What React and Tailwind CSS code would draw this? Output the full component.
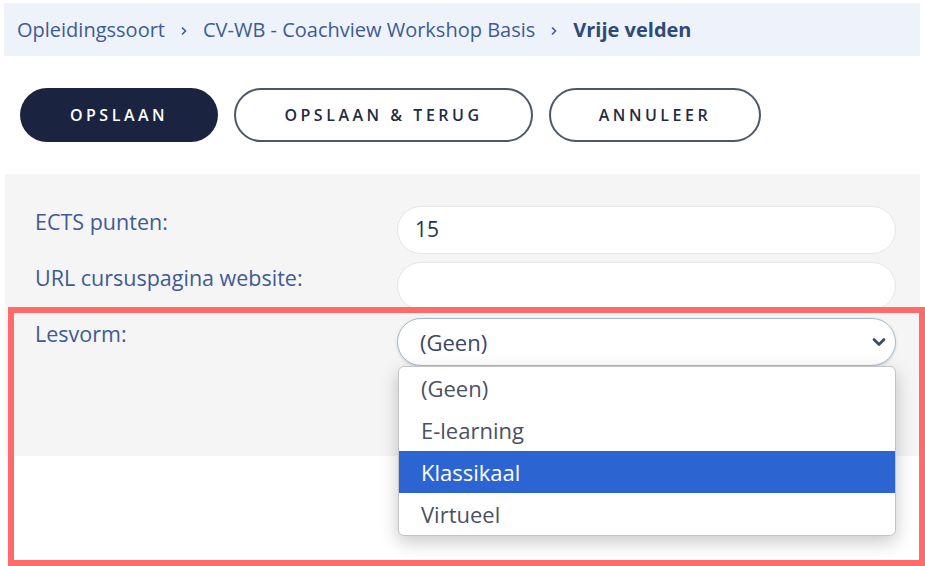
import { ChevronDown } from "lucide-react";

const font = { fontFamily: "'Open Sans', 'Noto Sans', sans-serif" };

function Crumb({ children, last }) {
  return (
    <>
      <span className={last ? "font-bold text-[#2f4a7a]" : "text-[#3e5b94]"}>{children}</span>
      {!last ? (
        <svg width="8" height="10" viewBox="0 0 8 10" className="mx-[15px] mt-[2px] text-[#3e5b94]">
          <path d="M2 1.5 L5.5 5 L2 8.5" fill="none" stroke="currentColor" strokeWidth="1.6" />
        </svg>
      ) : null}
    </>
  );
}

function Field({ label, children }) {
  return (
    <div className="flex items-start">
      <label className="w-[362px] pt-[2px] text-[21.5px] leading-[28px] text-[#3e5b94]">{label}</label>
      <div className="w-[499px]">{children}</div>
    </div>
  );
}

const options = ["(Geen)", "E-learning", "Klassikaal", "Virtueel"];

export default function App() {
  return (
    <div className="relative h-[566px] w-[925px] overflow-hidden bg-white pl-[4px] pr-[5px] pt-[3px]" style={font}>
      <nav className="flex h-[53px] items-center bg-[#eef3fb] px-[13px] text-[20px]">
        <Crumb>Opleidingssoort</Crumb>
        <Crumb>CV-WB - Coachview Workshop Basis</Crumb>
        <Crumb last>Vrije velden</Crumb>
      </nav>

      <div className="mt-[32px] flex gap-[16px] pl-[16px]">
        <button className="h-[54px] w-[198px] rounded-full bg-[#1a2340] text-[16px] font-semibold tracking-[0.22em] text-white">
          OPSLAAN
        </button>
        <button className="h-[54px] w-[299px] rounded-full border-2 border-[#4e566c] bg-white text-[16px] font-semibold tracking-[0.22em] text-[#1f2a44]">
          OPSLAAN &amp; TERUG
        </button>
        <button className="h-[54px] w-[212px] rounded-full border-2 border-[#4e566c] bg-white text-[16px] font-semibold tracking-[0.22em] text-[#1f2a44]">
          ANNULEER
        </button>
      </div>

      <section className="ml-[1px] mt-[32px] flex h-[282px] flex-col gap-[8px] bg-[#f5f5f5] pl-[30px] pt-[32px]">
        <Field label="ECTS punten:">
          <div className="flex h-[48px] items-center rounded-full border border-[#e6e6e6] bg-white pl-[17px] text-[21px] text-[#27324d]">
            15
          </div>
        </Field>
        <Field label="URL cursuspagina website:">
          <div className="h-[48px] rounded-full border border-[#e6e6e6] bg-white" />
        </Field>
        <Field label="Lesvorm:">
          <div className="relative">
            <div className="flex h-[48px] items-center justify-between rounded-full border border-[#a9b9d3] bg-white pl-[22px] pr-[6px] text-[22px] text-[#3b4763] shadow-[0_1px_3px_rgba(80,110,160,0.25)]">
              <span>(Geen)</span>
              <ChevronDown className="h-[20px] w-[20px] text-[#3c4a63]" strokeWidth={3.2} />
            </div>
            <ul className="absolute left-[1px] right-0 top-[48px] z-10 overflow-hidden rounded-[6px] border border-[#c4c4c4] bg-white shadow-[0_6px_18px_rgba(0,0,0,0.22)]">
              {options.map((option) => (
                <li
                  key={option}
                  className={
                    option === "Klassikaal"
                      ? "flex h-[42px] items-center bg-[#2c64d2] pl-[22px] text-[22px] text-white"
                      : "flex h-[42px] items-center pl-[22px] text-[22px] text-[#4a5165]"
                  }
                >
                  {option}
                </li>
              ))}
            </ul>
          </div>
        </Field>
      </section>

      <div className="pointer-events-none absolute left-[8px] top-[307px] h-[259px] w-[917px] border-[6px] border-[#ff6a6a]" />
    </div>
  );
}
